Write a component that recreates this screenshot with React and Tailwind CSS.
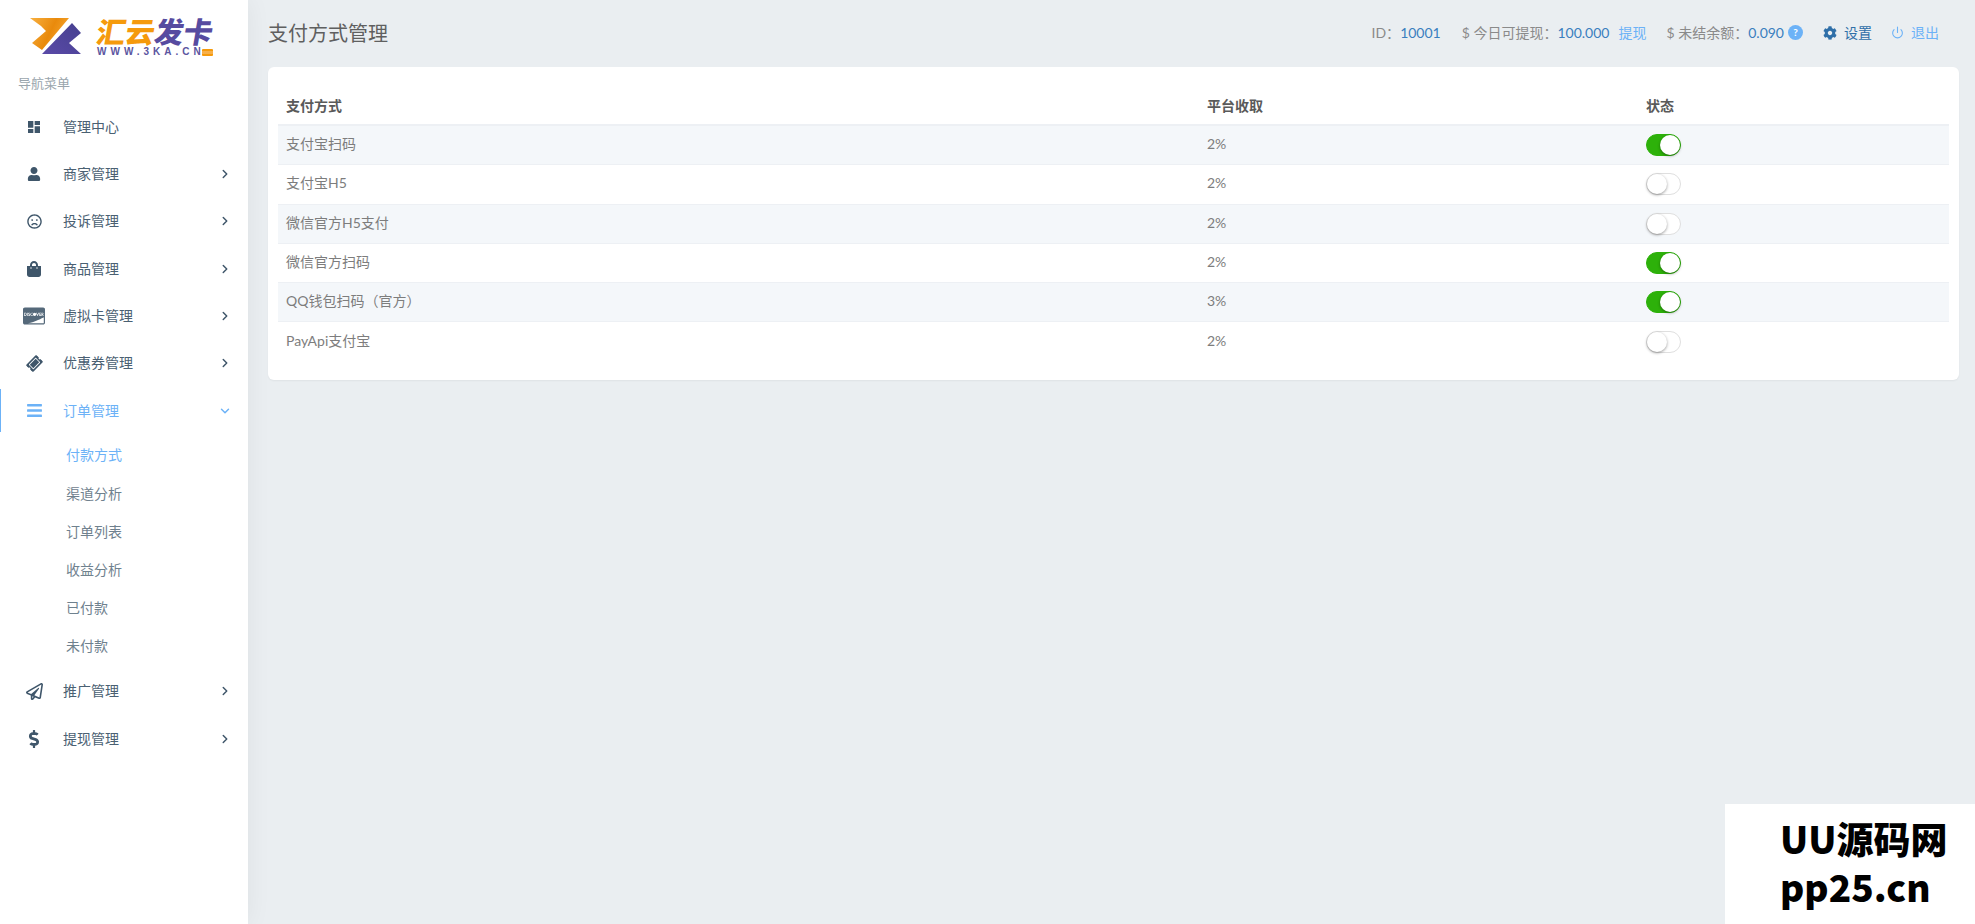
import React from 'react';
import { MdDashboard } from 'react-icons/md';
import {
  FaUser,
  FaRegFrown,
  FaShoppingBag,
  FaCcDiscover,
  FaTicketAlt,
  FaBars,
  FaRegPaperPlane,
  FaDollarSign,
  FaCog,
} from 'react-icons/fa';
import { ChevronRight, ChevronDown, Power } from 'lucide-react';

const topMenu = [
  { label: '管理中心', icon: <MdDashboard size={16} />, noArrow: true },
  { label: '商家管理', icon: <FaUser size={14} /> },
  { label: '投诉管理', icon: <FaRegFrown size={15} /> },
  { label: '商品管理', icon: <FaShoppingBag size={16} /> },
  { label: '虚拟卡管理', icon: <FaCcDiscover size={22} className="text-[#55697a]" /> },
  { label: '优惠券管理', icon: <FaTicketAlt size={15} className="-rotate-45" /> },
];

const subMenu = ['付款方式', '渠道分析', '订单列表', '收益分析', '已付款', '未付款'];

const payments = [
  { name: '支付宝扫码', fee: '2%', on: true },
  { name: '支付宝H5', fee: '2%', on: false },
  { name: '微信官方H5支付', fee: '2%', on: false },
  { name: '微信官方扫码', fee: '2%', on: true },
  { name: 'QQ钱包扫码（官方）', fee: '3%', on: true },
  { name: 'PayApi支付宝', fee: '2%', on: false },
];

const Logo = () => (
  <div className="h-[68px] flex items-start pl-[30px] pt-[18px]">
    <svg width="54" height="37" viewBox="0 0 54 37" className="shrink-0">
      <defs>
        <linearGradient id="orange" x1="0" y1="0" x2="1" y2="0.4">
          <stop offset="0" stopColor="#f8b040" />
          <stop offset="0.6" stopColor="#e98a0c" />
          <stop offset="1" stopColor="#f6a42c" />
        </linearGradient>
        <linearGradient id="purple" x1="0" y1="1" x2="1" y2="0">
          <stop offset="0" stopColor="#5a4aa8" />
          <stop offset="1" stopColor="#46408f" />
        </linearGradient>
      </defs>
      <polygon points="0,0 39,0 12,32 2,25 16,13 11,8" fill="url(#orange)" />
      <polygon points="42,5 51,15 39,25 51,36 12,36" fill="url(#purple)" />
    </svg>
    <div className="ml-[13px] flex flex-col">
      <div className="h-[26px] flex items-center text-[29px] leading-none font-black tracking-[0px]">
        <span className="inline-block -skew-x-[10deg] text-[#f59a0c]">汇云</span>
        <span className="inline-block -skew-x-[10deg] text-[#574ba0]">发卡</span>
      </div>
      <div className="h-[14px] mt-[1px] flex items-center text-[10px] leading-none font-bold tracking-[4px] text-[#5b55a0] font-['Liberation_Sans',sans-serif]">
        <span>WWW.3KA.CN</span>
        <span className="w-[11px] h-[7px] -ml-[3px] bg-[#f7b04a] border-y-2 border-[#f59a0c] rounded-[1px]"></span>
      </div>
    </div>
  </div>
);

const MenuItem = ({ item }) => (
  <div className="h-[43px] mb-[4.4px] flex items-center text-[#4a6072]">
    <div className="w-[63px] pl-[20px] pr-[15px] flex justify-center text-[#3f566a]">{item.icon}</div>
    <div className="flex-1 text-sm">{item.label}</div>
    {!item.noArrow && <ChevronRight size={14} strokeWidth={2.5} className="mr-[16px] text-[#3f566a]" />}
  </div>
);

const Sidebar = () => (
  <aside className="w-[248px] shrink-0 bg-white min-h-[924px] shadow-[0_0_24px_rgba(0,0,0,0.06)] relative">
    <Logo />
    <div className="h-[37px] pl-[18px] pt-[4px] text-[13px] leading-[22px] text-[#9aa5ad]">导航菜单</div>
    {topMenu.map((item) => (
      <MenuItem key={item.label} item={item} />
    ))}
    <div className="h-[43px] flex items-center border-l border-[#6cb2f7] text-[#6cb2f7]">
      <div className="w-[62px] pl-[19px] pr-[15px] flex justify-center">
        <FaBars size={17} />
      </div>
      <div className="flex-1 text-sm">订单管理</div>
      <ChevronDown size={14} strokeWidth={2.5} className="mr-[16px]" />
    </div>
    <div className="mt-[4px] mb-[4.3px]">
      {subMenu.map((label, i) => (
        <div
          key={label}
          className={`h-[38.2px] pl-[66px] flex items-center text-sm ${i === 0 ? 'text-[#6cb2f7]' : 'text-[#6f818e]'}`}
        >
          {label}
        </div>
      ))}
    </div>
    <MenuItem item={{ label: '推广管理', icon: <FaRegPaperPlane size={17} /> }} />
    <MenuItem item={{ label: '提现管理', icon: <FaDollarSign size={18} /> }} />
  </aside>
);

const TopBar = () => (
  <header className="h-[67px] pl-[20px] pr-[36px] pb-[2px] flex items-center justify-between">
    <h1 className="text-xl text-[#5f5f5f]">支付方式管理</h1>
    <div className="flex items-center text-sm text-[#8a8a8a]">
      <span>ID：</span>
      <span className="text-[#3a7fbf]">10001</span>
      <span className="ml-[21px]">$ 今日可提现：</span>
      <span className="text-[#3a7fbf]">100.000</span>
      <span className="ml-[9px] text-[#6cb2f7]">提现</span>
      <span className="ml-[20px]">$ 未结余额：</span>
      <span className="text-[#3a7fbf]">0.090</span>
      <span className="ml-[4px] w-[15px] h-[15px] rounded-full bg-[#6cb2f7] text-white text-[10px] font-bold flex items-center justify-center">?</span>
      <FaCog size={14} className="ml-[20px] text-[#2f6fa8]" />
      <span className="ml-[7px] text-[#2f6fa8]">设置</span>
      <Power size={13} className="ml-[19px] text-[#6cb2f7]" />
      <span className="ml-[7px] text-[#6cb2f7]">退出</span>
    </div>
  </header>
);

const Toggle = ({ on }) => (
  <span
    className={`relative block w-[35px] h-[22px] rounded-full border ${on ? 'bg-[#2db10a] border-[#2db10a]' : 'bg-white border-[#dfdfdf]'}`}
  >
    <span
      className={`absolute top-0 w-[20px] h-[20px] rounded-full bg-white shadow-[0_1px_3px_rgba(0,0,0,0.4)] ${on ? 'right-0' : 'left-0'}`}
    ></span>
  </span>
);

const PaymentTable = () => (
  <div className="mr-[16px] bg-white rounded-[6px] shadow-[0_1px_2px_rgba(0,0,0,0.05)] h-[313px] pl-[10px] pr-[10px] pt-[19px]">
    <div className="grid grid-cols-[921px_439px_1fr] h-[40px] pt-[2px] border-b-2 border-[#edf0f4] items-center text-sm font-bold text-[#5a5a5a]">
      <div className="pl-[8px]">支付方式</div>
      <div className="pl-[8px]">平台收取</div>
      <div className="pl-[8px]">状态</div>
    </div>
    {payments.map((row, i) => (
      <div
        key={row.name}
        className={`grid grid-cols-[921px_439px_1fr] h-[39.3px] items-center text-sm text-[#7d7d7d] ${i < 5 ? 'border-b border-[#edf0f4]' : ''} ${i % 2 === 0 ? 'bg-[#f4f7fa]' : 'bg-white'}`}
      >
        <div className="pl-[8px] pb-[2px]">{row.name}</div>
        <div className="pl-[8px] pb-[2px]">{row.fee}</div>
        <div className="pl-[8px]">
          <Toggle on={row.on} />
        </div>
      </div>
    ))}
  </div>
);

export default function App() {
  return (
    <div className="relative h-[924px] overflow-hidden flex bg-[#eaeef1] font-['Lato','Noto_Sans_CJK_SC',sans-serif]">
      <Sidebar />
      <main className="flex-1 pl-[20px]">
        <div className="-ml-[20px]">
          <TopBar />
        </div>
        <PaymentTable />
      </main>
      <div className="absolute right-0 bottom-0 w-[250px] h-[120px] bg-white pl-[55px] pt-[10px] text-[37px] leading-[48px] font-black text-black font-['Noto_Sans_CJK_SC',sans-serif]">
        <div>UU源码网</div>
        <div>pp25.cn</div>
      </div>
    </div>
  );
}
